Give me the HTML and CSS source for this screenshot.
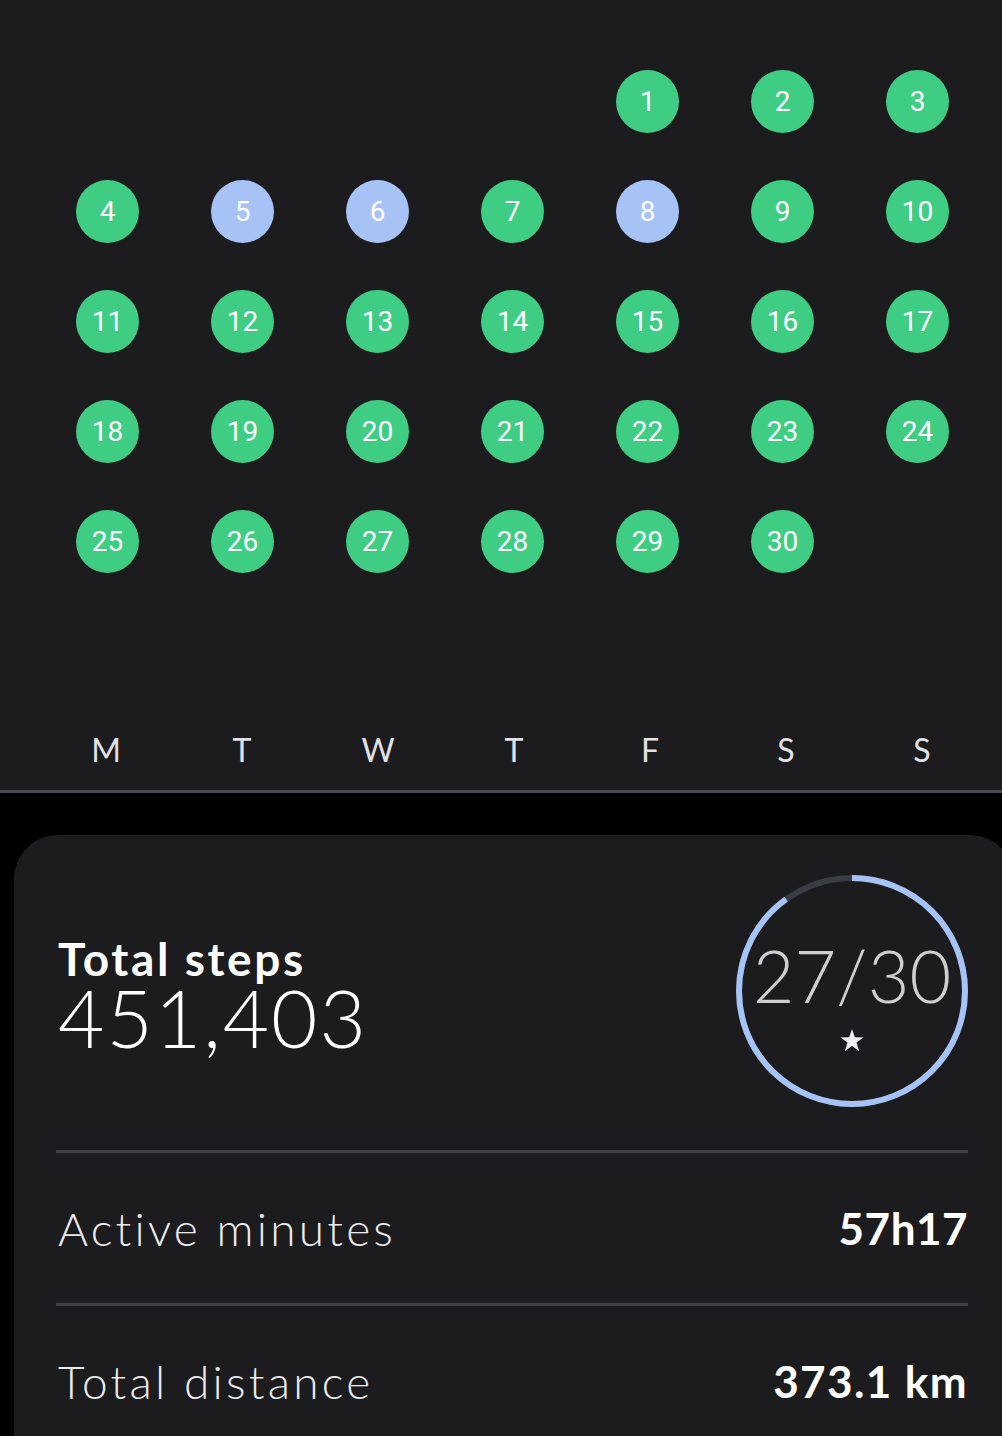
FILE: index.html
```html
<html>
<head>
    <title>Monthly steps</title>
    <link rel="stylesheet" href="styles.css">
</head>
<body>
    <div class="calendar">
        <div class="days">
            <div class="day"></div>
            <div class="day"></div>
            <div class="day"></div>
            <div class="day"></div>
            <div class="day"><span class="dot green">1</span></div>
            <div class="day"><span class="dot green">2</span></div>
            <div class="day"><span class="dot green">3</span></div>

            <div class="day"><span class="dot green">4</span></div>
            <div class="day"><span class="dot blue">5</span></div>
            <div class="day"><span class="dot blue">6</span></div>
            <div class="day"><span class="dot green">7</span></div>
            <div class="day"><span class="dot blue">8</span></div>
            <div class="day"><span class="dot green">9</span></div>
            <div class="day"><span class="dot green">10</span></div>

            <div class="day"><span class="dot green">11</span></div>
            <div class="day"><span class="dot green">12</span></div>
            <div class="day"><span class="dot green">13</span></div>
            <div class="day"><span class="dot green">14</span></div>
            <div class="day"><span class="dot green">15</span></div>
            <div class="day"><span class="dot green">16</span></div>
            <div class="day"><span class="dot green">17</span></div>

            <div class="day"><span class="dot green">18</span></div>
            <div class="day"><span class="dot green">19</span></div>
            <div class="day"><span class="dot green">20</span></div>
            <div class="day"><span class="dot green">21</span></div>
            <div class="day"><span class="dot green">22</span></div>
            <div class="day"><span class="dot green">23</span></div>
            <div class="day"><span class="dot green">24</span></div>

            <div class="day"><span class="dot green">25</span></div>
            <div class="day"><span class="dot green">26</span></div>
            <div class="day"><span class="dot green">27</span></div>
            <div class="day"><span class="dot green">28</span></div>
            <div class="day"><span class="dot green">29</span></div>
            <div class="day"><span class="dot green">30</span></div>
            <div class="day"></div>
        </div>

        <div class="weekdays">
            <span>M</span>
            <span>T</span>
            <span>W</span>
            <span>T</span>
            <span>F</span>
            <span>S</span>
            <span>S</span>
        </div>
    </div>

    <div class="card">
        <div class="summary">
            <div class="steps">
                <div class="stepsLabel">Total steps</div>
                <div class="stepsValue">451,403</div>
            </div>
            <div class="ring">
                <svg width="232" height="232" viewBox="0 0 232 232">
                    <circle cx="116" cy="116" r="113" fill="none" stroke="#3a3d44" stroke-width="6"/>
                    <circle cx="116" cy="116" r="113" fill="none" stroke="#a6c3f7" stroke-width="6"
                        stroke-dasharray="639 710" transform="rotate(-90 116 116)"/>
                </svg>
                <div class="ringText">
                    <div class="ringCount">27/30</div>
                    <svg class="star" width="24" height="23" viewBox="0 0 24 23">
                        <polygon points="12,0 14.8,8.3 23.5,8.4 16.5,13.6 19.1,22 12,17 4.9,22 7.5,13.6 0.5,8.4 9.2,8.3" fill="#eceef2"/>
                    </svg>
                </div>
            </div>
        </div>

        <div class="stat">
            <span class="statLabel">Active minutes</span>
            <span class="statValue">57h17</span>
        </div>
        <div class="stat">
            <span class="statLabel">Total distance</span>
            <span class="statValue wide">373.1 km</span>
        </div>
    </div>
</body>
</html>
```

FILE: styles.css
```css
body {
    margin: 0;
    background-color: black;
    overflow: hidden;
    font-family: 'Lato', 'Noto Sans', sans-serif;
}

.calendar {
    background-color: #1c1c1e;
    padding-top: 46px;
    padding-bottom: 20px;
    border-bottom: 3px solid #4a4a50;
}

.days {
    display: grid;
    grid-template-columns: repeat(7, 135px);
    grid-auto-rows: 110px;
    padding-left: 40px;
}

.day {
    display: flex;
    align-items: center;
    justify-content: center;
}

.dot {
    width: 63px;
    height: 63px;
    border-radius: 50%;
    display: flex;
    align-items: center;
    justify-content: center;
    font-family: 'Roboto', sans-serif;
    font-size: 28px;
    color: white;
}

.green {
    background-color: #3ecd83;
}

.blue {
    background-color: #a7c2f5;
}

.weekdays {
    display: grid;
    grid-template-columns: repeat(7, 136px);
    padding-left: 38px;
    margin-top: 134px;
    height: 40px;
    line-height: 40px;
    font-size: 32px;
    color: #e2e2e6;
    text-align: center;
}

.card {
    background-color: #1c1c1e;
    margin-top: 42px;
    margin-left: 14px;
    margin-right: -12px;
    border-radius: 44px;
    padding: 40px 46px 40px 42px;
    color: white;
}

.summary {
    display: flex;
    justify-content: space-between;
    align-items: center;
    padding-bottom: 43px;
    border-bottom: 3px solid #414248;
}

.steps {
    padding-left: 2px;
    padding-top: 9px;
    padding-bottom: 9px;
}

.stepsLabel {
    font-size: 46px;
    font-weight: bold;
    line-height: 52px;
    letter-spacing: 2.6px;
}

.stepsValue {
    font-size: 80px;
    font-weight: 300;
    line-height: 64px;
    letter-spacing: 2px;
}

.ring {
    position: relative;
    width: 232px;
    height: 232px;
}

.ringText {
    position: absolute;
    top: 0;
    left: 0;
    width: 100%;
    height: 100%;
    display: flex;
    flex-direction: column;
    align-items: center;
    justify-content: center;
}

.ringCount {
    font-size: 72px;
    font-weight: 300;
    color: #cfcfd2;
    line-height: 72px;
    margin-top: 8px;
}

.star {
    margin-top: 18px;
}

.stat {
    display: flex;
    justify-content: space-between;
    align-items: center;
    height: 150px;
    padding-left: 2px;
    border-bottom: 3px solid #414248;
}

.stat:last-child {
    border-bottom: none;
}

.statLabel {
    font-size: 46px;
    font-weight: 300;
    color: #ececef;
    letter-spacing: 3.2px;
}

.statValue {
    font-size: 44px;
    font-weight: bold;
    letter-spacing: 0.5px;
}

.wide {
    letter-spacing: 1.4px;
}
```
